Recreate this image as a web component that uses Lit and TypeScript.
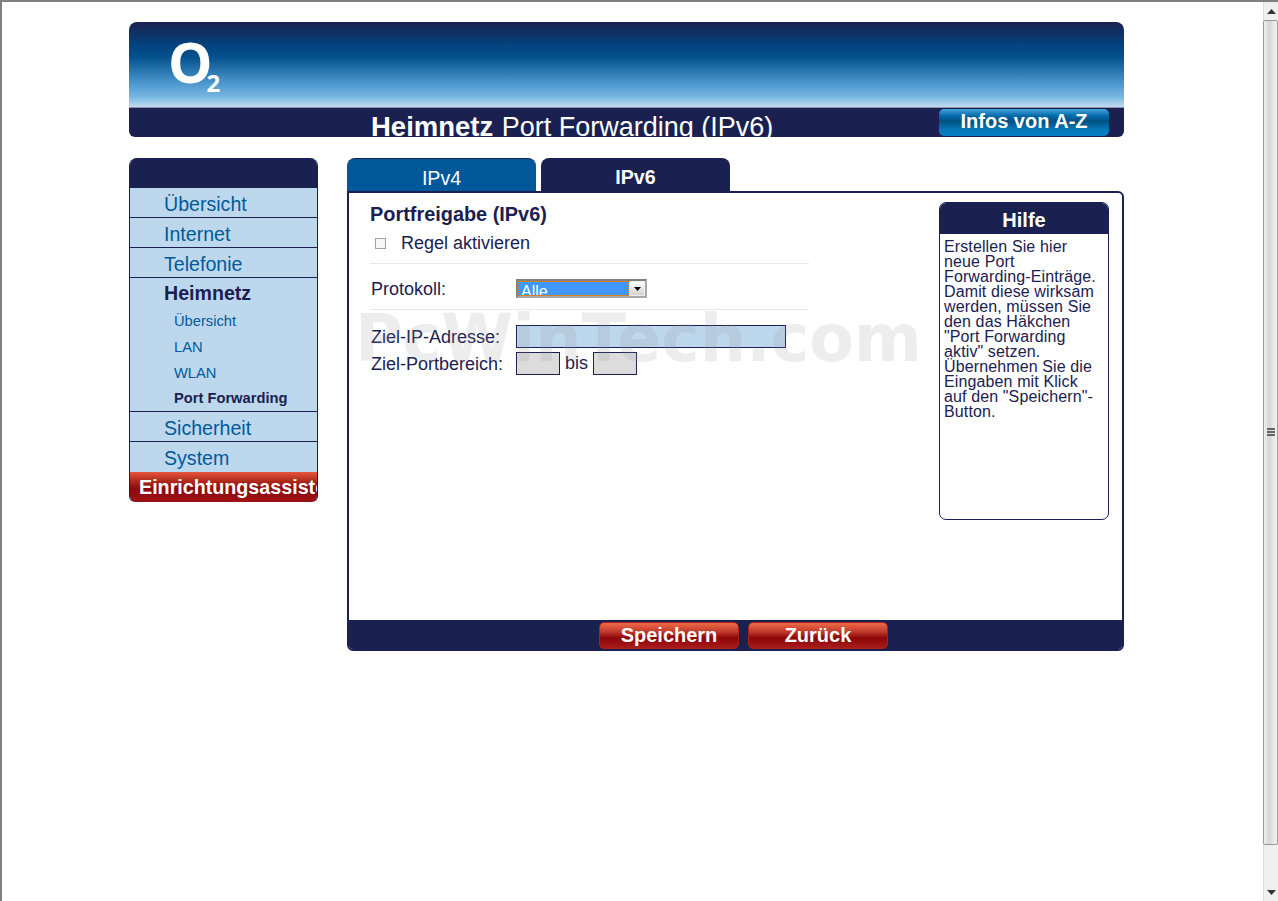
import { LitElement, html, css } from "lit";
import { customElement } from "lit/decorators.js";

@customElement("app-root")
export class AppRoot extends LitElement {
  static styles = css`
    :host { display: block; font-family: "Liberation Sans", Arial, sans-serif; color: #1a2150; }
    * { box-sizing: border-box; }
    .window { position: relative; display: flex; height: 901px; width: 1278px; overflow: hidden; background: #fff; border-top: 2px solid #808080; border-left: 2px solid #808080; }
    .page { flex: 1; padding: 20px 0 0 127px; min-width: 0; }
    .wrap { width: 995px; }

    .header { height: 115px; border-radius: 8px 8px 6px 6px; overflow: hidden; display: flex; flex-direction: column; }
    .sky { height: 85px; padding: 0 0 0 39px; background: linear-gradient(#1a2150 0%, #03447f 28%, #05528e 42%, #4b97cd 72%, #77b6e2 88%, #c3dcef 100%); color: #fff; display: flex; align-items: flex-start; }
    .o { font: 700 56px/78px "Open Sans", sans-serif; letter-spacing: -1px; }
    .two { font: 700 24px/24px "Open Sans", sans-serif; margin: 49px 0 0 -5px; }
    .bar { flex: 1; background: #1a2150; border-top: 1px solid #8d93ad; display: grid; grid-template-columns: 810px 170px; overflow: hidden; }
    .title { color: #fff; font-size: 27px; line-height: 37px; padding-left: 242px; white-space: nowrap; height: 29px; overflow: hidden; }
    .title b { font-size: 27.5px; padding-right: 1px; }
    .az { margin-top: 1px; height: 27px; border-radius: 5px; background: linear-gradient(#49a4dc 0%, #036bab 25%, #01507f 45%, #0676b8 75%, #0a80c4 100%); color: #fff; font: bold 20px/25px "Liberation Sans", sans-serif; text-align: center; white-space: nowrap; }

    .body { display: grid; grid-template-columns: 189px 777px; column-gap: 29px; margin-top: 21px; align-items: start; }

    .nav { border-radius: 8px 8px 6px 6px; overflow: hidden; background: #bdd7ed; border-left: 1px solid #1a2150; border-right: 1px solid #1a2150; }
    .nav-head { height: 30px; background: #1a2150; margin: 0 -1px; }
    .nav-item { height: 30px; padding-left: 34px; font-size: 19.6px; line-height: 33px; color: #005a9a; border-bottom: 1px solid #1a2150; white-space: nowrap; }
    .nav-group { border-bottom: 1px solid #1a2150; height: 134px; }
    .nav-group .top { height: 30px; padding-left: 34px; font: bold 19.6px/30px "Liberation Sans", sans-serif; color: #1a2150; }
    .sub { height: 26px; padding-left: 44px; font-size: 14.7px; line-height: 26px; color: #005a9a; white-space: nowrap; }
    .sub.on { font-weight: bold; color: #1a2150; line-height: 24px; height: 25px; }
    .nav-item.last { border-bottom: 0; height: 30px; }
    .wizard { margin: 0 -1px; height: 30px; padding-left: 10px; overflow: hidden; white-space: nowrap; color: #fff; font: bold 19.7px/30px "Liberation Sans", sans-serif; background: linear-gradient(#e8553c 0%, #b02a1c 30%, #8a0a0c 55%, #a01216 100%); border-radius: 0 0 6px 6px; }
    .wizard span { display: block; width: 179px; overflow: hidden; }

    .tabs { display: flex; gap: 5px; height: 33px; }
    .tab { width: 189px; height: 33px; border-radius: 8px 8px 0 0; text-align: center; color: #fff; font-size: 19.6px; line-height: 38px; overflow: hidden; }
    .tab.off { background: #00589a; border-top: 1px solid #1a2150; }
    .tab.on { background: #1a2150; font-weight: bold; }

    .panel { height: 460px; border: 2px solid #1a2150; border-radius: 0 6px 6px 6px; display: flex; flex-direction: column; overflow: hidden; }
    .content { flex: 1; display: grid; grid-template-columns: 590px 170px; }
    .form { padding: 11px 0 0 21px; }
    .form h2 { margin: 0; font-size: 19.9px; line-height: 21px; font-weight: bold; }
    .rule { display: flex; align-items: center; height: 36px; font-size: 18px; padding-left: 5px; }
    .box { width: 11px; height: 11px; background: #f6f6f6; border: 1px solid #a0a0a0; margin-right: 15px; }
    .sep { height: 1px; width: 439px; background: #e8e8e8; }
    .sep.first { margin-top: 2px; }
    .row { display: grid; grid-template-columns: 145px 1fr; align-items: center; font-size: 18px; padding-left: 1px; }
    .row > span { padding-top: 1px; }
    .row.proto { height: 45px; padding-top: 4px; }
    .select { width: 131px; height: 19px; border: 2px solid; border-color: #808080 #a8a8a8 #a8a8a8 #808080; background: #d4d0c8; display: flex; overflow: hidden; }
    .select .val { flex: 1; background: #3d97fd; color: #fff; border: 1px dotted #e08a2c; padding-left: 2px; font-size: 16px; line-height: 20px; overflow: hidden; }
    .select .arrow { width: 16px; background: linear-gradient(#fff, #d8d4cc); display: flex; align-items: center; justify-content: center; border: 1px solid #eee; }
    .arrow svg { display: block; }
    .row.ip { height: 23px; margin-top: 15px; }
    .row.port { height: 23px; margin-top: 4px; }
    .ipbox { width: 270px; height: 23px; background: #bdd7ed; border: 1px solid #1a2150; }
    .ports { display: flex; align-items: center; gap: 5px; }
    .pbox { width: 44px; height: 23px; background: #dcdcdc; border: 1px solid #1a2150; }

    .help { margin-top: 9px; height: 318px; border: 1px solid #1a2150; border-radius: 7px; overflow: hidden; }
    .help h3 { margin: -1px -1px 0; height: 32px; background: #1a2150; color: #fff; text-align: center; font: bold 20px/36px "Liberation Sans", sans-serif; }
    .help p { margin: 0; padding: 5px 0 0 4px; font-size: 16px; line-height: 15px; letter-spacing: 0.12px; white-space: nowrap; }

    .foot { height: 29px; background: #1a2150; display: flex; justify-content: center; gap: 9px; padding: 2px 0 0 16px; flex: none; }
    .btn { width: 140px; height: 27px; border-radius: 5px; border: 1px solid #a8201c; text-align: center; color: #fff; font: bold 20px/25px "Liberation Sans", sans-serif; background: linear-gradient(#f06a48 0%, #c03a2c 35%, #8c0508 60%, #a81c1c 100%); }

    .mark { position: absolute; left: 353px; top: 297px; font: bold 65px/80px "DejaVu Sans", sans-serif; color: rgba(150, 150, 150, 0.17); white-space: nowrap; pointer-events: none; }

    .scroll { width: 15px; flex: none; display: flex; flex-direction: column; background: #f0f0f0; border-left: 1px solid #dcdcdc; }
    .scroll .end { height: 18px; flex: none; display: flex; align-items: center; justify-content: center; }
    .thumb { height: 825px; flex: none; margin-left: -1px; display: flex; align-items: center; justify-content: center; background: linear-gradient(90deg, #f0f0f0 0%, #d6d6d6 40%, #e6e6e6 70%, #f2f2f2 100%); border: 1px solid #999; border-radius: 2px; }
    .track { flex: 1; }
  `;

  render() {
    return html`
      <div class="window">
        <div class="page">
          <div class="wrap">
            <header class="header">
              <div class="sky"><span class="o">O</span><span class="two">2</span></div>
              <div class="bar">
                <div class="title"><b>Heimnetz</b> Port Forwarding (IPv6)</div>
                <div class="az">Infos von A-Z</div>
              </div>
            </header>
            <div class="body">
              <nav class="nav">
                <div class="nav-head"></div>
                <div class="nav-item">Übersicht</div>
                <div class="nav-item">Internet</div>
                <div class="nav-item">Telefonie</div>
                <div class="nav-group">
                  <div class="top">Heimnetz</div>
                  <div class="sub">Übersicht</div>
                  <div class="sub">LAN</div>
                  <div class="sub">WLAN</div>
                  <div class="sub on">Port Forwarding</div>
                </div>
                <div class="nav-item">Sicherheit</div>
                <div class="nav-item last">System</div>
                <div class="wizard"><span>Einrichtungsassistent</span></div>
              </nav>
              <main>
                <div class="tabs">
                  <div class="tab off">IPv4</div>
                  <div class="tab on">IPv6</div>
                </div>
                <section class="panel">
                  <div class="content">
                    <div class="form">
                      <h2>Portfreigabe (IPv6)</h2>
                      <div class="rule"><span class="box"></span>Regel aktivieren</div>
                      <div class="sep first"></div>
                      <div class="row proto">
                        <span>Protokoll:</span>
                        <div class="select">
                          <div class="val">Alle</div>
                          <div class="arrow"><svg width="7" height="4" viewBox="0 0 7 4"><path d="M0 0h7L3.500 4z" fill="#000"/></svg></div>
                        </div>
                      </div>
                      <div class="sep"></div>
                      <div class="row ip"><span>Ziel-IP-Adresse:</span><div class="ipbox"></div></div>
                      <div class="row port"><span>Ziel-Portbereich:</span><div class="ports"><div class="pbox"></div>bis<div class="pbox"></div></div></div>
                    </div>
                    <aside class="help">
                      <h3>Hilfe</h3>
                      <p>Erstellen Sie hier<br>neue Port<br>Forwarding-Einträge.<br>Damit diese wirksam<br>werden, müssen Sie<br>den das Häkchen<br>"Port Forwarding<br>aktiv" setzen.<br>Übernehmen Sie die<br>Eingaben mit Klick<br>auf den "Speichern"-<br>Button.</p>
                    </aside>
                  </div>
                  <div class="foot">
                    <div class="btn">Speichern</div>
                    <div class="btn">Zurück</div>
                  </div>
                </section>
              </main>
            </div>
          </div>
        </div>
        <div class="scroll">
          <div class="end"><svg width="9" height="5" viewBox="0 0 9 5"><path d="M4.500 0L9 5H0z" fill="#333"/></svg></div>
          <div class="thumb"><svg width="8" height="9" viewBox="0 0 8 9"><path d="M0 1h8M0 4h8M0 7h8" stroke="#666" stroke-width="2"/></svg></div>
          <div class="track"></div>
          <div class="end"><svg width="9" height="5" viewBox="0 0 9 5"><path d="M0 0h9L4.500 5z" fill="#333"/></svg></div>
        </div>
        <div class="mark">PcWinTech.com</div>
      </div>
    `;
  }
}
